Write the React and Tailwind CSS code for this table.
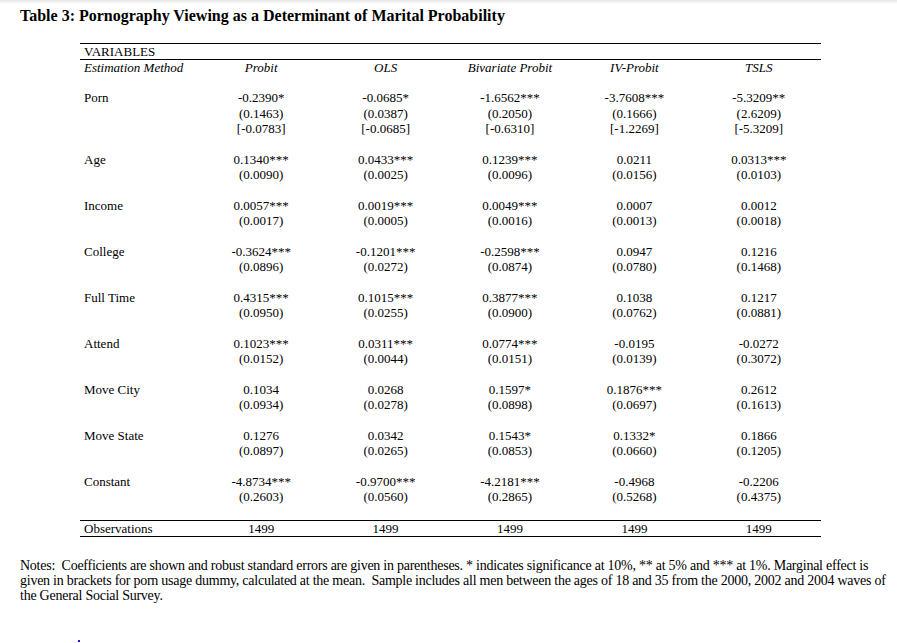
const methods = ["Probit", "OLS", "Bivariate Probit", "IV-Probit", "TSLS"];

const rows = [
  {
    name: "Porn",
    cells: [
      ["-0.2390*", "(0.1463)", "[-0.0783]"],
      ["-0.0685*", "(0.0387)", "[-0.0685]"],
      ["-1.6562***", "(0.2050)", "[-0.6310]"],
      ["-3.7608***", "(0.1666)", "[-1.2269]"],
      ["-5.3209**", "(2.6209)", "[-5.3209]"],
    ],
  },
  {
    name: "Age",
    cells: [
      ["0.1340***", "(0.0090)"],
      ["0.0433***", "(0.0025)"],
      ["0.1239***", "(0.0096)"],
      ["0.0211", "(0.0156)"],
      ["0.0313***", "(0.0103)"],
    ],
  },
  {
    name: "Income",
    cells: [
      ["0.0057***", "(0.0017)"],
      ["0.0019***", "(0.0005)"],
      ["0.0049***", "(0.0016)"],
      ["0.0007", "(0.0013)"],
      ["0.0012", "(0.0018)"],
    ],
  },
  {
    name: "College",
    cells: [
      ["-0.3624***", "(0.0896)"],
      ["-0.1201***", "(0.0272)"],
      ["-0.2598***", "(0.0874)"],
      ["0.0947", "(0.0780)"],
      ["0.1216", "(0.1468)"],
    ],
  },
  {
    name: "Full Time",
    cells: [
      ["0.4315***", "(0.0950)"],
      ["0.1015***", "(0.0255)"],
      ["0.3877***", "(0.0900)"],
      ["0.1038", "(0.0762)"],
      ["0.1217", "(0.0881)"],
    ],
  },
  {
    name: "Attend",
    cells: [
      ["0.1023***", "(0.0152)"],
      ["0.0311***", "(0.0044)"],
      ["0.0774***", "(0.0151)"],
      ["-0.0195", "(0.0139)"],
      ["-0.0272", "(0.3072)"],
    ],
  },
  {
    name: "Move City",
    cells: [
      ["0.1034", "(0.0934)"],
      ["0.0268", "(0.0278)"],
      ["0.1597*", "(0.0898)"],
      ["0.1876***", "(0.0697)"],
      ["0.2612", "(0.1613)"],
    ],
  },
  {
    name: "Move State",
    cells: [
      ["0.1276", "(0.0897)"],
      ["0.0342", "(0.0265)"],
      ["0.1543*", "(0.0853)"],
      ["0.1332*", "(0.0660)"],
      ["0.1866", "(0.1205)"],
    ],
  },
  {
    name: "Constant",
    cells: [
      ["-4.8734***", "(0.2603)"],
      ["-0.9700***", "(0.0560)"],
      ["-4.2181***", "(0.2865)"],
      ["-0.4968", "(0.5268)"],
      ["-0.2206", "(0.4375)"],
    ],
  },
];

const grid = "grid grid-cols-[119px_repeat(5,1fr)]";

export default function App() {
  return (
    <div className="relative w-[897px] h-[643px] overflow-hidden bg-white text-black font-['Liberation_Serif','Times_New_Roman',serif]">
      <div className="h-[4px] bg-gradient-to-b from-[#e6e6e6] to-white" />
      <h1 className="pl-[20px] mt-[3px] text-[16px] leading-[18px] font-bold">
        Table 3: Pornography Viewing as a Determinant of Marital Probability
      </h1>

      <div className="ml-[80px] mt-[18px] w-[741px] text-[13px]">
        <div className="border-t border-black leading-[15px] pl-[4px]">VARIABLES</div>
        <div className={`${grid} border-t border-black leading-[16px] italic`}>
          <div className="pl-[4px]">Estimation Method</div>
          {methods.map((m) => (
            <div key={m} className="text-center">
              {m}
            </div>
          ))}
        </div>

        <div className="pt-[14px]">
          {rows.map((row) => (
            <div key={row.name} className={`${grid} pb-[15px] leading-[15.5px]`}>
              <div className="pl-[4px]">{row.name}</div>
              {row.cells.map((lines, i) => (
                <div key={i} className="flex flex-col items-center">
                  {lines.map((t, j) => (
                    <span key={j}>{t}</span>
                  ))}
                </div>
              ))}
            </div>
          ))}
        </div>

        <div className={`${grid} border-t border-b border-black leading-[15px]`}>
          <div className="pl-[4px]">Observations</div>
          {methods.map((m) => (
            <div key={m} className="text-center">
              1499
            </div>
          ))}
        </div>
      </div>

      <p className="ml-[20px] mt-[21px] w-[868px] text-[14px] leading-[15px] tracking-[-0.25px]">
        Notes:&nbsp; Coefficients are shown and robust standard errors are given in parentheses. * indicates
        significance at 10%, ** at 5% and *** at 1%. Marginal effect is given in brackets for porn usage
        dummy, calculated at the mean.&nbsp; Sample includes all men between the ages of 18 and 35 from the
        2000, 2002 and 2004 waves of the General Social Survey.
      </p>

      <div className="absolute left-[78px] top-[640px] w-[2px] h-[2px] bg-[#1a1aff]" />
    </div>
  );
}
